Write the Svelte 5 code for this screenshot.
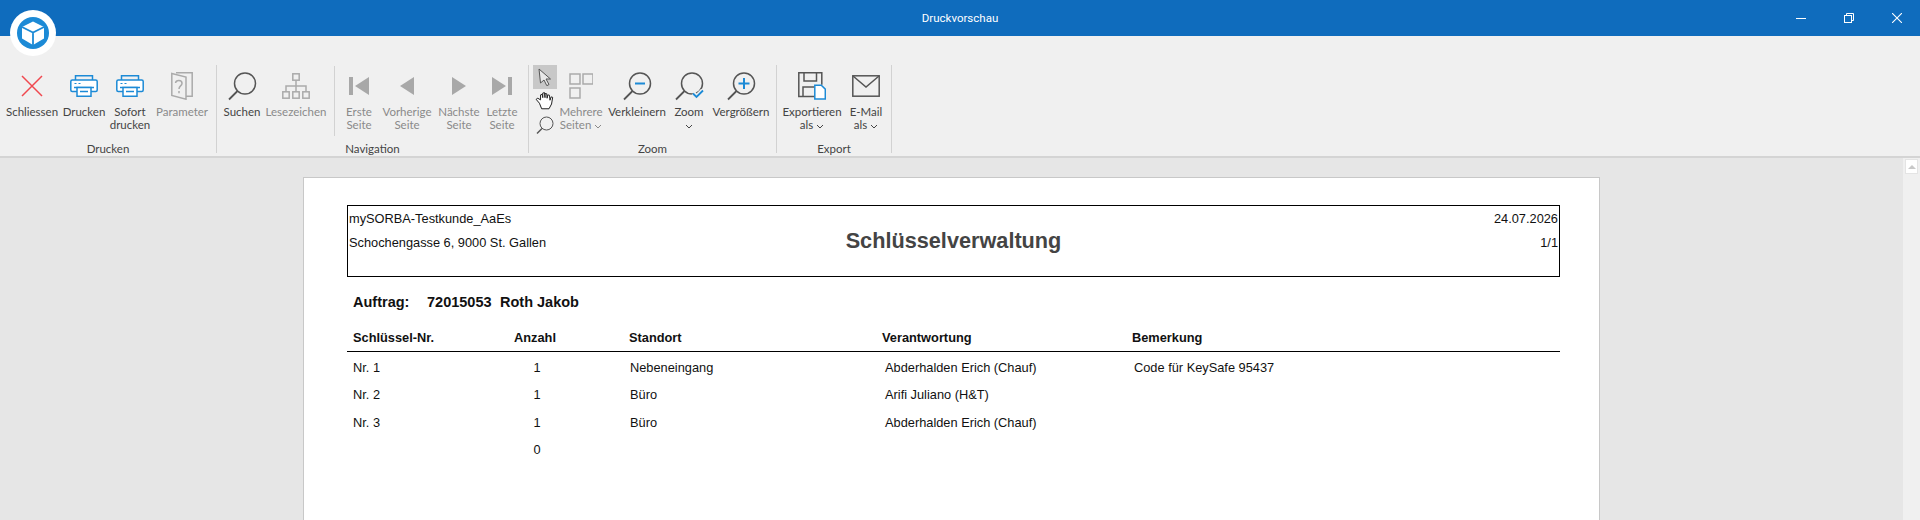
<script>
  const rows = [
    { nr: "Nr. 1", anzahl: "1", standort: "Nebeneingang", person: "Abderhalden Erich (Chauf)", note: "Code für KeySafe 95437" },
    { nr: "Nr. 2", anzahl: "1", standort: "Büro", person: "Arifi Juliano (H&T)", note: "" },
    { nr: "Nr. 3", anzahl: "1", standort: "Büro", person: "Abderhalden Erich (Chauf)", note: "" },
    { nr: "", anzahl: "0", standort: "", person: "", note: "" }
  ];
</script>

{#snippet chevron()}
  <svg class="chev" viewBox="0 0 8 5" width="8" height="5"><path d="M1 1l3 3 3-3" fill="none" stroke="currentColor" stroke-width="1" /></svg>
{/snippet}

{#snippet lens(extra)}
  <svg viewBox="0 0 30 30" width="30" height="30">
    <circle cx="18" cy="12.500" r="10.500" fill="none" stroke="#555" stroke-width="1.500" />
    <path d="M10.500 20L2 28.500" fill="none" stroke="#555" stroke-width="1.800" />
    {@render extra?.()}
  </svg>
{/snippet}

{#snippet minusMark()}
  <path d="M13 12.500h10" stroke="#1c8ad6" stroke-width="2" />
{/snippet}
{#snippet plusMark()}
  <path d="M12.500 12.500h11M18 7v11" stroke="#1c8ad6" stroke-width="2" />
{/snippet}
{#snippet checkMark()}
  <path d="M19 22.500l3.500 3.500L29 19.500" fill="none" stroke="#f0f0f0" stroke-width="5" />
  <path d="M19 22.500l3.500 3.500L29 19.500" fill="none" stroke="#1c8ad6" stroke-width="1.800" />
{/snippet}

{#snippet printer()}
  <svg viewBox="0 0 28 22" width="28" height="22" fill="none" stroke="#1c8ad6" stroke-width="1.500">
    <path d="M5.500 5V.8h17V5" />
    <rect x=".8" y="5" width="26.400" height="11.500" rx="1.500" fill="#fff" />
    <path d="M4 12.500h20" />
    <path d="M7 12.500v8.700h14v-8.700z" fill="#fff" />
    <path d="M10 16.500h8" />
    <path d="M4.500 8.500h2M8.500 8.500h2" stroke-width="1.200" />
  </svg>
{/snippet}

<div class="titlebar">
  <span class="title">Druckvorschau</span>
  <div class="winbtns">
    <svg viewBox="0 0 10 10" width="10" height="10"><path d="M0 5.500h10" stroke="#fff" /></svg>
    <svg viewBox="0 0 10 10" width="10" height="10" fill="none" stroke="#fff"><rect x=".5" y="2.500" width="7" height="7" /><path d="M2.500 2.500v-2h7v7h-2" /></svg>
    <svg viewBox="0 0 10 10" width="10" height="10"><path d="M0 0l10 10M10 0L0 10" stroke="#fff" stroke-width="1.100" /></svg>
  </div>
</div>

<div class="logo">
  <svg viewBox="0 0 46 46" width="46" height="46">
    <circle cx="23" cy="23" r="23" fill="#fff" />
    <circle cx="23" cy="23" r="16" fill="#1c8ad6" />
    <path d="M23 11.500l11 5.500v11.500L23 35l-11-6.500V17z" fill="#fff" />
    <path d="M12 17l11 5.500L34 17M23 22.500V35" fill="none" stroke="#1c8ad6" stroke-width="1.800" />
  </svg>
</div>

<div class="ribbon">
  <section class="group g-print">
    <div class="tools">
      <button class="tool w52">
        <span class="ico"><svg viewBox="0 0 22 22" width="22" height="22"><path d="M1 1l20 20M21 1L1 21" stroke="#f0484f" stroke-width="1.500" /></svg></span>
        <span>Schliessen</span>
      </button>
      <button class="tool w52"><span class="ico">{@render printer()}</span><span>Drucken</span></button>
      <button class="tool w40"><span class="ico">{@render printer()}</span><span>Sofort<br />drucken</span></button>
      <button class="tool w64 off">
        <span class="ico"><svg viewBox="0 0 22 28" width="22" height="28" fill="none" stroke="#aaa" stroke-width="1.500"><path d="M5 .8h16.200v23.500H15" /><path d="M.8 1.500l14.200 3.500v22.200L.8 23.500z" /><path d="M4.500 11c.5-3.500 6.500-3.500 6.500.2 0 2.800-3 2.600-3 5.800M8 19v2.200" /></svg></span>
        <span>Parameter</span>
      </button>
    </div>
    <div class="grouplabel">Drucken</div>
  </section>

  <section class="group g-nav">
    <div class="tools">
      <button class="tool w50">
        <span class="ico">{@render lens()}</span>
        <span>Suchen</span>
      </button>
      <button class="tool w58 off">
        <span class="ico"><svg viewBox="0 0 28 26" width="28" height="26" fill="none" stroke="#aaa" stroke-width="1.500"><rect x="10.800" y=".8" width="6.400" height="6.400" /><rect x=".8" y="18.800" width="6.400" height="6.400" /><rect x="10.800" y="18.800" width="6.400" height="6.400" /><rect x="20.800" y="18.800" width="6.400" height="6.400" /><path d="M14 7v12M4 19v-6h20v6" /></svg></span>
        <span>Lesezeichen</span>
      </button>
      <i class="innersep"></i>
      <button class="tool w40 off">
        <span class="ico"><svg viewBox="0 0 20 18" width="20" height="18" fill="#a8a8a8"><rect width="4" height="18" /><path d="M20 0v18L6 9z" /></svg></span>
        <span>Erste<br />Seite</span>
      </button>
      <button class="tool w56 off">
        <span class="ico"><svg viewBox="0 0 14 18" width="14" height="18" fill="#a8a8a8"><path d="M14 0v18L0 9z" /></svg></span>
        <span>Vorherige<br />Seite</span>
      </button>
      <button class="tool w48 off">
        <span class="ico"><svg viewBox="0 0 14 18" width="14" height="18" fill="#a8a8a8"><path d="M0 0v18L14 9z" /></svg></span>
        <span>Nächste<br />Seite</span>
      </button>
      <button class="tool w38 off">
        <span class="ico"><svg viewBox="0 0 20 18" width="20" height="18" fill="#a8a8a8"><rect x="16" width="4" height="18" /><path d="M0 0v18L14 9z" /></svg></span>
        <span>Letzte<br />Seite</span>
      </button>
    </div>
    <div class="grouplabel">Navigation</div>
  </section>

  <section class="group g-zoom">
    <div class="tools">
      <div class="mini">
        <span class="mini-btn active"><svg viewBox="0 0 16 18" width="16" height="18"><path d="M2 1l11.500 10H9l3 5.500-2.200 1.200-2.800-5.700L3.500 15z" fill="#e8e8e8" stroke="#555" /></svg></span>
        <span class="mini-btn"><svg viewBox="0 0 18 18" width="20" height="20"><path d="M4 11L1 7.500l1.500-1L5 8V3.500l1.500-.5.500 3V1.800l1.600-.3.400 4.500V2.300l1.600.2.300 4 .6-3 1.500.3.500 4.500 1-3 1.400.4-1 6-2.300 4.300H6z" fill="#fff" stroke="#222" stroke-width=".9" /></svg></span>
        <span class="mini-btn"><svg viewBox="0 0 18 18" width="18" height="18" fill="none" stroke="#555"><circle cx="10.500" cy="7.500" r="6.500" /><path d="M6 12.500L1 17.500" stroke-width="1.400" /></svg></span>
      </div>
      <button class="tool w48 off">
        <span class="ico"><svg viewBox="0 0 24 26" width="24" height="26" fill="none" stroke="#aaa" stroke-width="1.500"><rect x="1" y="1" width="10" height="10" /><rect x="14" y="1" width="10" height="10" /><rect x="1" y="15" width="10" height="10" /></svg></span>
        <span>Mehrere<br />Seiten {@render chevron()}</span>
      </button>
      <button class="tool w56 ml4"><span class="ico">{@render lens(minusMark)}</span><span>Verkleinern</span></button>
      <button class="tool w48"><span class="ico">{@render lens(checkMark)}</span><span>Zoom<br />{@render chevron()}</span></button>
      <button class="tool w56"><span class="ico">{@render lens(plusMark)}</span><span>Vergrößern</span></button>
    </div>
    <div class="grouplabel">Zoom</div>
  </section>

  <section class="group g-export">
    <div class="tools">
      <button class="tool w64">
        <span class="ico"><svg viewBox="0 0 28 28" width="28" height="28" fill="none" stroke="#555" stroke-width="1.500"><path d="M17 24.500H.8V.8h23v12" /><path d="M6 1v8h12.500V1M5 24v-9h11" /><path d="M16.800 13.200h6.500l4 4v9.900H16.800z" fill="#fff" stroke="#1c8ad6" /></svg></span>
        <span>Exportieren<br />als {@render chevron()}</span>
      </button>
      <button class="tool w44">
        <span class="ico"><svg viewBox="0 0 28 22" width="28" height="22" fill="none" stroke="#555" stroke-width="1.500"><rect x=".8" y=".8" width="26.400" height="20.400" /><path d="M1 1l13 11L27 1" /></svg></span>
        <span>E-Mail<br />als {@render chevron()}</span>
      </button>
    </div>
    <div class="grouplabel">Export</div>
  </section>
</div>

<div class="viewer">
  <div class="scroller"><span class="scrollup"><i></i></span></div>
  <div class="page">
    <header class="frame">
      <div class="frame-left">
        <div>mySORBA-Testkunde_AaEs</div>
        <div>Schochengasse 6, 9000 St. Gallen</div>
      </div>
      <h1>Schlüsselverwaltung</h1>
      <div class="frame-right">
        <div>24.07.2026</div>
        <div>1/1</div>
      </div>
    </header>

    <div class="auftrag">
      <span class="a-label">Auftrag:</span>
      <span class="a-nr">72015053</span>
      <span>Roth Jakob</span>
    </div>

    <div class="thead">
      <span class="c1">Schlüssel-Nr.</span>
      <span class="c2">Anzahl</span>
      <span class="c3">Standort</span>
      <span class="c4">Verantwortung</span>
      <span class="c5">Bemerkung</span>
    </div>
    {#each rows as r}
      <div class="row">
        <span class="c1">{r.nr}</span>
        <span class="c2 num">{r.anzahl}</span>
        <span class="c3">{r.standort}</span>
        <span class="c4">{r.person}</span>
        <span class="c5">{r.note}</span>
      </div>
    {/each}
  </div>
</div>

<style>
  :global(body) {
    margin: 0;
    background: #e6e6e6;
    overflow: hidden;
  }

  .titlebar {
    height: 36px;
    background: #0f6cbd;
    color: #fff;
    position: relative;
    display: flex;
    align-items: center;
    justify-content: center;
    font: 11.500px Roboto, sans-serif;
  }

  .winbtns {
    position: absolute;
    right: 18px;
    top: 13px;
    display: flex;
    gap: 38px;
  }

  .logo {
    position: absolute;
    left: 10px;
    top: 10px;
    width: 46px;
    height: 46px;
  }

  .ribbon {
    height: 122px;
    box-sizing: border-box;
    background: #f0f0f0;
    border-bottom: 2px solid #d4d4d4;
    padding-top: 29px;
    display: flex;
    font: 11.500px Lato, sans-serif;
    color: #444;
  }

  .group {
    box-sizing: border-box;
    height: 88px;
    border-right: 1px solid #d2d2d2;
    display: flex;
    flex-direction: column;
    flex: none;
  }

  .g-print { width: 217px; padding-left: 6px; }
  .g-nav { width: 312px; }
  .g-zoom { width: 248px; padding-left: 4px; }
  .g-export { width: 115px; padding-left: 3px; }

  .tools {
    display: flex;
    height: 76px;
    flex: none;
  }

  .grouplabel {
    text-align: center;
    height: 12px;
    line-height: 16px;
    margin-left: -6px;
    color: #444;
  }
  .g-nav .grouplabel { margin-left: 0; }
  .g-zoom .grouplabel { margin-left: -4px; }
  .g-export .grouplabel { margin-left: -3px; }

  .tool {
    all: unset;
    box-sizing: border-box;
    padding-top: 5px;
    display: flex;
    flex-direction: column;
    align-items: center;
    text-align: center;
    line-height: 13px;
    white-space: nowrap;
    flex: none;
  }

  .tool.off { color: #8a8a8a; }
  .w38 { width: 38px; }
  .w40 { width: 40px; }
  .w44 { width: 44px; }
  .w48 { width: 48px; }
  .w50 { width: 50px; }
  .w52 { width: 52px; }
  .w56 { width: 56px; }
  .w58 { width: 58px; }
  .w64 { width: 64px; }
  .ml4 { margin-left: 4px; }

  .ico {
    height: 32px;
    margin-bottom: 3px;
    display: flex;
    align-items: center;
    justify-content: center;
  }

  .innersep {
    width: 1px;
    height: 70px;
    background: #d2d2d2;
    margin: 1px 4px 0 9px;
    flex: none;
  }

  .mini {
    width: 24px;
    display: flex;
    flex-direction: column;
    flex: none;
  }

  .mini-btn {
    height: 24px;
    display: flex;
    align-items: center;
    justify-content: center;
  }
  .mini-btn.active { background: #c8c8c8; }

  .chev { vertical-align: middle; }

  .viewer {
    position: relative;
    height: 362px;
    overflow: hidden;
    padding-top: 19px;
    box-sizing: border-box;
  }

  .scroller {
    position: absolute;
    right: 0;
    top: 0;
    bottom: 0;
    width: 17px;
    background: #f0f0f0;
  }

  .scrollup {
    display: flex;
    align-items: center;
    justify-content: center;
    margin: 1px 2px 0 2px;
    height: 15px;
    background: #fff;
    border: 1px solid #e4e4e4;
    box-sizing: border-box;
  }
  .scrollup i {
    border: 4px solid transparent;
    border-top: 0;
    border-bottom: 4px solid #c8c8c8;
  }

  .page {
    box-sizing: border-box;
    margin-left: 303px;
    width: 1297px;
    height: 420px;
    background: #fff;
    border: 1px solid #c8c8c8;
    padding: 27px 0 0 43px;
    font: 12.800px "Liberation Sans", sans-serif;
    color: #111;
  }

  .frame {
    box-sizing: border-box;
    width: 1213px;
    height: 72px;
    border: 1px solid #000;
    display: grid;
    grid-template-columns: 1fr auto 1fr;
    padding: 0 1px;
  }

  .frame-left, .frame-right {
    display: flex;
    flex-direction: column;
    gap: 9px;
    padding-top: 5px;
    line-height: 15px;
  }
  .frame-right { text-align: right; }

  h1 {
    margin: 22px 0 0;
    font: bold 21.700px/25px "Liberation Sans", sans-serif;
    color: #444;
  }

  .auftrag {
    margin: 17px 0 0 6px;
    font-weight: bold;
    font-size: 14.500px;
    line-height: 17px;
    display: flex;
  }
  .a-label { width: 74px; }
  .a-nr { width: 73px; }

  .thead, .row {
    display: grid;
    grid-template-columns: 161px 115px 253px 250px 1fr;
    width: 1213px;
    align-items: center;
  }

  .thead {
    margin: 18px 0 2px;
    height: 23px;
    box-sizing: border-box;
    border-bottom: 1px solid #000;
    padding: 0 0 6px 6px;
    font-weight: bold;
  }

  .row {
    height: 27.300px;
    padding-left: 6px;
    box-sizing: border-box;
  }
  .row .c4 { padding-left: 3px; }
  .row .c5 { padding-left: 2px; }
  .row .c3 { padding-left: 1px; }
  .c2.num { text-align: center; padding-right: 69px; }
</style>
